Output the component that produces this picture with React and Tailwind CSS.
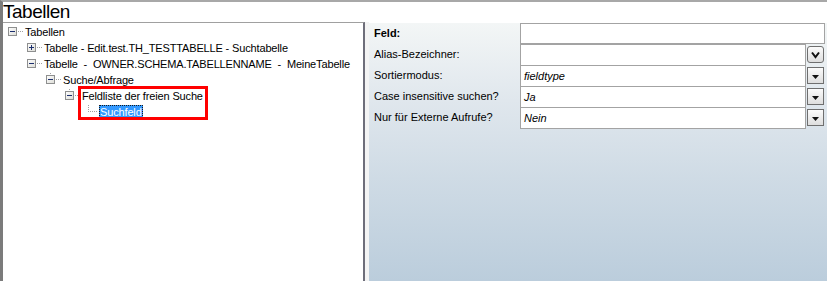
import React from "react";

const rows = [
  { level: 0, kind: "minus", text: "Tabellen" },
  { level: 1, kind: "plus", text: "Tabelle - Edit.test.TH_TESTTABELLE - Suchtabelle" },
  { level: 1, kind: "minus", text: "Tabelle  -  OWNER.SCHEMA.TABELLENNAME  -  MeineTabelle" },
  { level: 2, kind: "minus", text: "Suche/Abfrage", tick: true },
  { level: 3, kind: "minus", text: "Feldliste der freien Suche", tick: true },
  { level: 4, kind: "leaf", text: "Suchfeld", selected: true },
];

function Expander({ kind, tick }) {
  if (kind === "leaf") {
    return (
      <svg width="15" height="16" className="shrink-0">
        {[1, 3, 5, 7].map((y) => (
          <rect key={"v" + y} x="4" y={y} width="1" height="1" fill="#a0a0a0" />
        ))}
        {[6, 8, 10, 12].map((x) => (
          <rect key={"h" + x} x={x} y="7" width="1" height="1" fill="#a0a0a0" />
        ))}
      </svg>
    );
  }
  return (
    <svg width="17" height="16" className="shrink-0">
      {tick && <rect x="4" y="1" width="1" height="1" fill="#a0a0a0" />}
      <defs>
        <linearGradient id="bx" x1="0" y1="0" x2="1" y2="1">
          <stop offset="0" stopColor="#ffffff" />
          <stop offset="1" stopColor="#dcdcd6" />
        </linearGradient>
      </defs>
      <rect x="0.5" y="3.5" width="8" height="8" fill="url(#bx)" stroke="#8e8f8f" />
      <rect x="2" y="7" width="5" height="1" fill="#1c2f6e" />
      {kind === "plus" && <rect x="4" y="5" width="1" height="5" fill="#1c2f6e" />}
      {[10, 12, 14].map((x) => (
        <rect key={x} x={x} y="7" width="1" height="1" fill="#a0a0a0" />
      ))}
    </svg>
  );
}

function DropButton({ chevron }) {
  return (
    <div
      className={
        "w-[17px] h-[17px] mt-[2px] ml-[1px] shrink-0 border border-[#6f6f6f] bg-[linear-gradient(to_bottom,#fbfbfb,#dedede)] flex items-center justify-center " +
        (chevron ? "rounded-[3px]" : "")
      }
    >
      {chevron ? (
        <svg width="9" height="8">
          <path d="M1 1.5 L4.5 6 L8 1.5" stroke="#111" strokeWidth="2" fill="none" />
        </svg>
      ) : (
        <svg width="7" height="4" className="mt-[3px]">
          <path d="M0 0 H7 L3.5 4 Z" fill="#111" />
        </svg>
      )}
    </div>
  );
}

const props = [
  { label: "Feld:", bold: true, value: "", full: true },
  { label: "Alias-Bezeichner:", value: "", chevron: true },
  { label: "Sortiermodus:", value: "fieldtype" },
  { label: "Case insensitive suchen?", value: "Ja" },
  { label: "Nur für Externe Aufrufe?", value: "Nein", last: true },
];

export default function App() {
  return (
    <div
      className="w-[827px] h-[281px] bg-white flex flex-col overflow-hidden border-t-2 border-l-[3px] border-t-[#a8a8a8] border-l-[#7b7b7b] text-black"
      style={{ fontFamily: '"Liberation Sans", Arial, sans-serif' }}
    >
      <div className="h-[20px] shrink-0 text-[19px] leading-[20px] tracking-[-0.5px] pl-[0px]">Tabellen</div>
      <div className="flex flex-1 min-h-0">
        <div className="relative w-[362px] shrink-0 border-t border-r-2 border-t-[#a0a0a0] border-r-[#6e6e7a] pt-[1px]">
          {rows.map((r, i) => (
            <div
              key={i}
              className="flex h-[16px] items-center text-[11px] leading-[16px] tracking-[-0.15px] whitespace-pre"
              style={{ paddingLeft: 5 + 19 * r.level }}
            >
              <Expander kind={r.kind} tick={r.tick} />
              {r.selected ? (
                <span className="bg-[#3399ff] text-white px-[1px] h-[15px] leading-[15px] outline-1 outline-dotted outline-[#1a1a1a] -outline-offset-1">
                  {r.text}
                </span>
              ) : (
                <span>{r.text}</span>
              )}
            </div>
          ))}
          <div className="absolute left-[75px] top-[63px] w-[130px] h-[34px] border-[3px] border-[#ff0000] pointer-events-none" />
        </div>
        <div className="w-[4px] shrink-0 bg-[#f4f4f4]" />
        <div className="flex-1 mt-[1px] bg-[linear-gradient(to_bottom,#f3f6f6,#e0e7ed_30%,#cfdbe5_60%,#bbcddc)] text-[11px]">
          {props.map((p, i) => (
            <div key={i} className="flex h-[21px]">
              <div className={"w-[151px] shrink-0 pl-[5px] leading-[21px] " + (p.bold ? "font-bold" : "")}>
                {p.label}
              </div>
              {p.full ? (
                <div className="w-[305px] h-[21px] bg-white border border-[#a3a3a3]" />
              ) : (
                <div className="flex">
                  <div
                    className={
                      "w-[286px] bg-white border-x border-t border-[#a3a3a3] italic pl-[3px] leading-[20px] " +
                      (p.last ? "h-[22px] border-b" : "h-[21px]")
                    }
                  >
                    {p.value}
                  </div>
                  <DropButton chevron={p.chevron} />
                </div>
              )}
            </div>
          ))}
        </div>
      </div>
    </div>
  );
}
